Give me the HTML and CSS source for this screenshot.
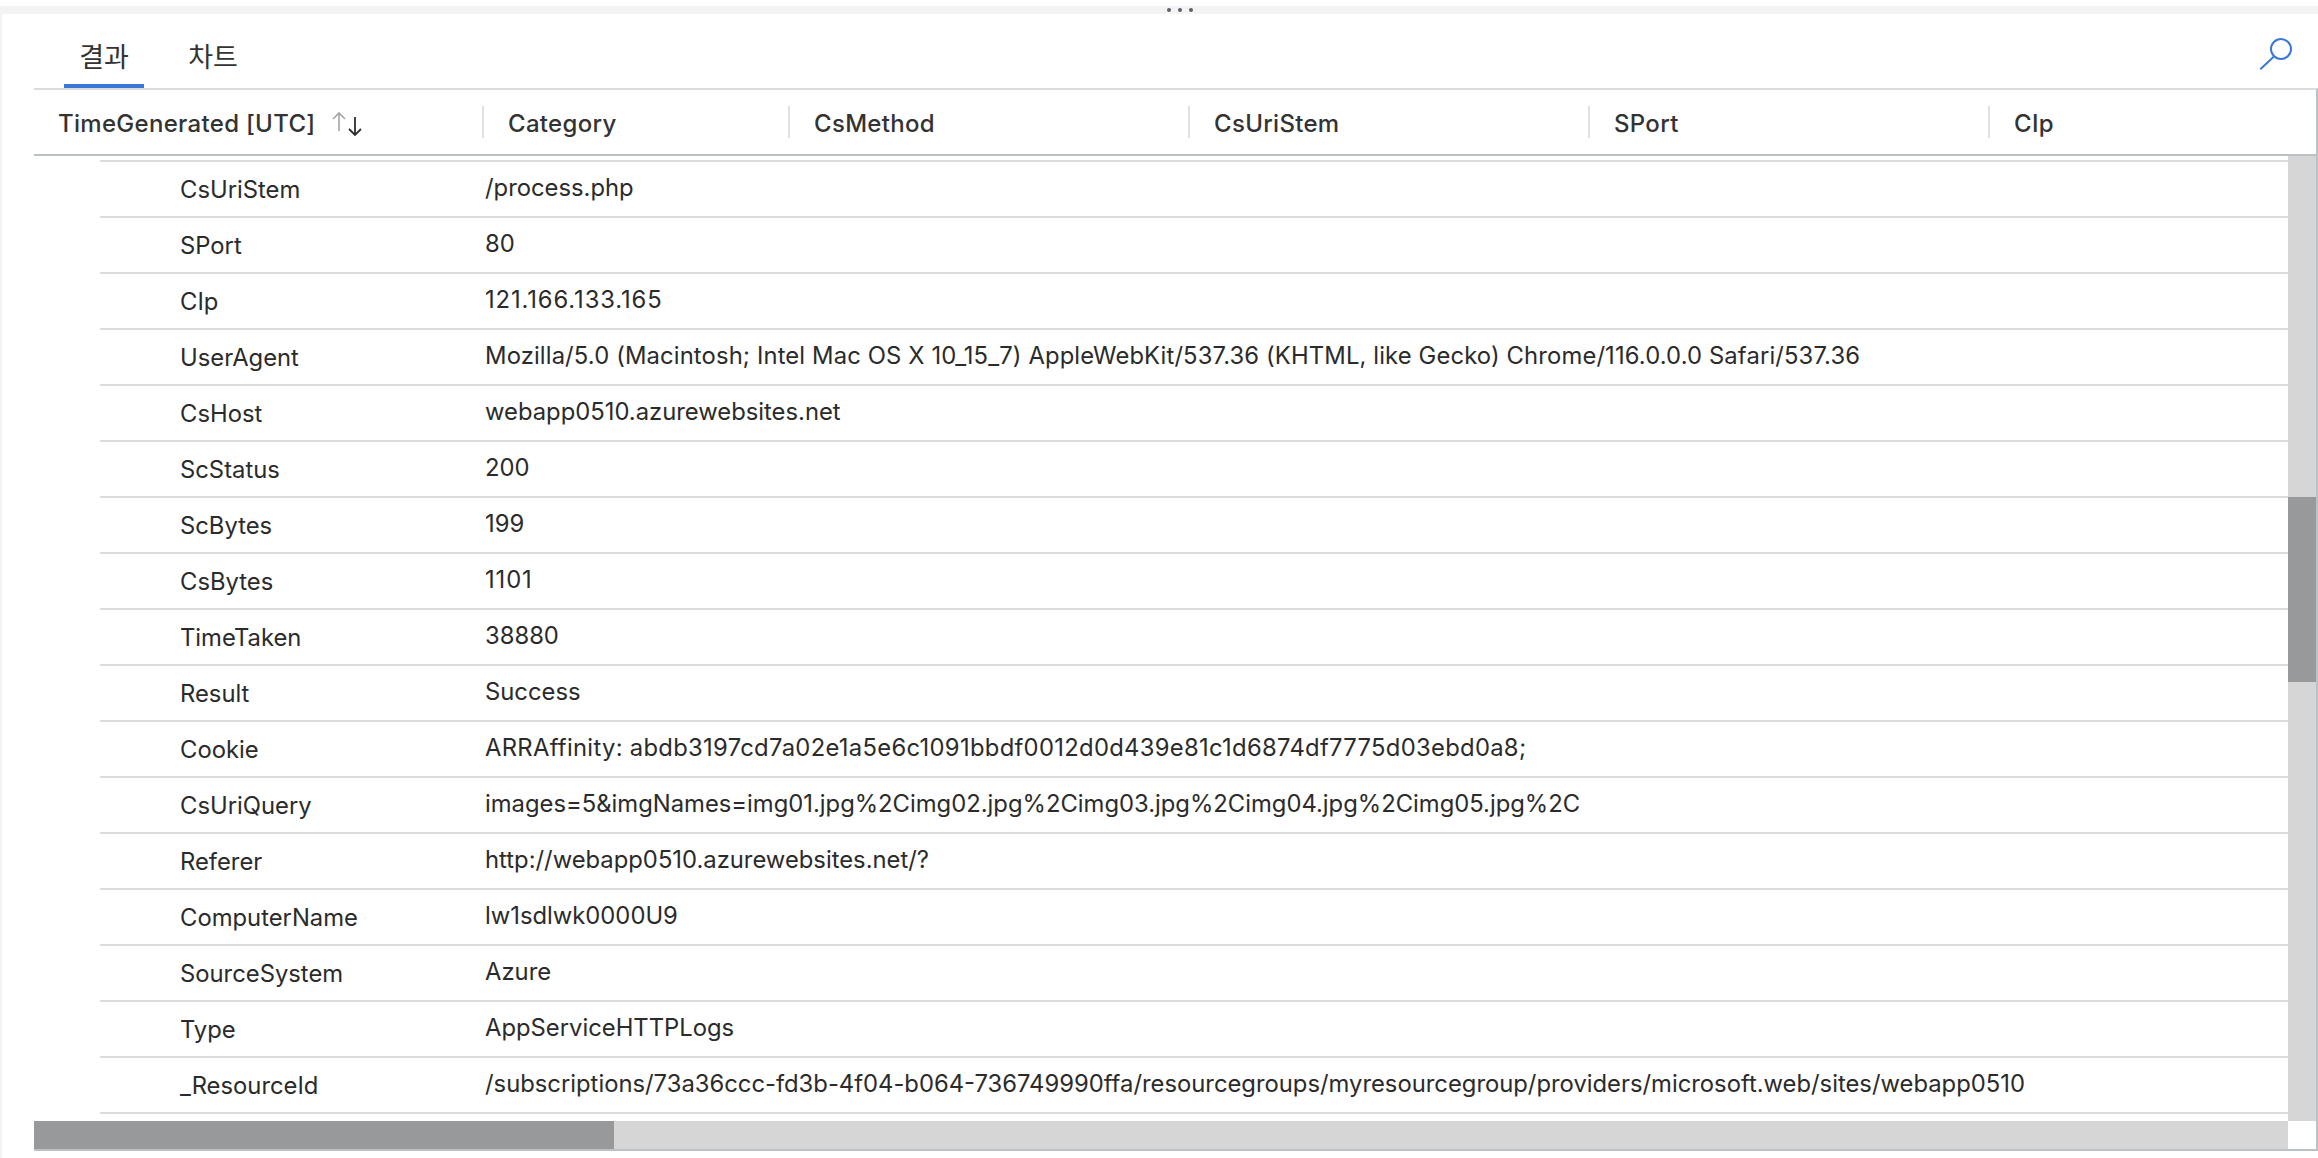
FILE: index.html
```html
<!DOCTYPE html>
<html lang="ko">
<head>
<meta charset="utf-8">
<title>결과</title>
<link rel="stylesheet" href="styles.css">
</head>
<body>
<div class="splitter"><span class="dot"></span><span class="dot"></span><span class="dot"></span></div>
<main class="panel">
  <div class="tabbar">
    <div class="tabs">
      <div class="tab tab-active">결과</div>
      <div class="tab">차트</div>
    </div>
    <svg class="search" width="36" height="36" viewBox="0 0 36 36" fill="none"><circle cx="24" cy="13" r="10" stroke="#3a78d4" stroke-width="2"/><path d="M16.700 20.700 3.300 33.300" stroke="#3a78d4" stroke-width="2"/></svg>
  </div>
  <div class="grid">
    <div class="head">
      <div class="hcell hcell-first">TimeGenerated [UTC]
        <svg class="sort" width="34" height="28" viewBox="0 0 34 28" fill="none"><path d="M9 22V4M3 10l6-6 6 6" stroke="#a6a6a6" stroke-width="1.600"/><path d="M25 8v18M19 20l6 6 6-6" stroke="#2f2f2f" stroke-width="1.800"/></svg>
      </div>
      <div class="hcell hcell-cat"><span class="sep"></span>Category</div>
      <div class="hcell hcell-std"><span class="sep"></span>CsMethod</div>
      <div class="hcell hcell-std"><span class="sep"></span>CsUriStem</div>
      <div class="hcell hcell-std"><span class="sep"></span>SPort</div>
      <div class="hcell hcell-last"><span class="sep"></span>CIp</div>
    </div>
    <div class="body">
      <div class="rows">
        <div class="row"><div class="key">CsUriStem</div><div class="val">/process.php</div></div>
        <div class="row"><div class="key">SPort</div><div class="val">80</div></div>
        <div class="row"><div class="key">CIp</div><div class="val val-ip">121.166.133.165</div></div>
        <div class="row"><div class="key">UserAgent</div><div class="val val-ua">Mozilla/5.0 (Macintosh; Intel Mac OS X 10_15_7) AppleWebKit/537.36 (KHTML, like Gecko) Chrome/116.0.0.0 Safari/537.36</div></div>
        <div class="row"><div class="key">CsHost</div><div class="val">webapp0510.azurewebsites.net</div></div>
        <div class="row"><div class="key">ScStatus</div><div class="val">200</div></div>
        <div class="row"><div class="key">ScBytes</div><div class="val">199</div></div>
        <div class="row"><div class="key">CsBytes</div><div class="val val-ip">1101</div></div>
        <div class="row"><div class="key">TimeTaken</div><div class="val">38880</div></div>
        <div class="row"><div class="key">Result</div><div class="val">Success</div></div>
        <div class="row"><div class="key">Cookie</div><div class="val val-hash">ARRAffinity: abdb3197cd7a02e1a5e6c1091bbdf0012d0d439e81c1d6874df7775d03ebd0a8;</div></div>
        <div class="row"><div class="key">CsUriQuery</div><div class="val">images=5&amp;imgNames=img01.jpg%2Cimg02.jpg%2Cimg03.jpg%2Cimg04.jpg%2Cimg05.jpg%2C</div></div>
        <div class="row"><div class="key">Referer</div><div class="val">http://webapp0510.azurewebsites.net/?</div></div>
        <div class="row"><div class="key">ComputerName</div><div class="val">lw1sdlwk0000U9</div></div>
        <div class="row"><div class="key">SourceSystem</div><div class="val">Azure</div></div>
        <div class="row"><div class="key">Type</div><div class="val">AppServiceHTTPLogs</div></div>
        <div class="row"><div class="key">_ResourceId</div><div class="val">/subscriptions/73a36ccc-fd3b-4f04-b064-736749990ffa/resourcegroups/myresourcegroup/providers/microsoft.web/sites/webapp0510</div></div>
      </div>
      <div class="vtrack"><div class="vthumb"></div></div>
    </div>
    <div class="hbar">
      <div class="htrack"><div class="hthumb"></div></div>
      <div class="corner"></div>
    </div>
  </div>
</main>
</body>
</html>
```
FILE: styles.css
```css
html, body { margin: 0; padding: 0; background: #fff; }
body {
  width: 2318px;
  height: 1158px;
  overflow: hidden;
  font-family: Inter, "Noto Sans CJK KR", sans-serif;
  color: #2b2b2b;
  padding-top: 6px;
  box-sizing: border-box;
}
.splitter {
  height: 8px;
  background: #f3f3f3;
  display: flex;
  justify-content: center;
  align-items: center;
  gap: 7px;
  padding-left: 42px;
}
.dot { width: 4px; height: 4px; border-radius: 50%; background: #5f5f66; }
.panel { border-left: 2px solid #f3f3f3; height: 1144px; box-sizing: border-box; }
.tabbar {
  height: 74px;
  margin-left: 32px;
  display: flex;
  justify-content: space-between;
  box-sizing: border-box;
  padding-left: 30px;
  padding-right: 25px;
}
.tabs { display: flex; gap: 44px; }
.tab {
  width: 80px;
  height: 74px;
  box-sizing: border-box;
  font-family: "Noto Sans CJK KR", sans-serif;
  font-size: 27px;
  line-height: 84px;
  color: #333;
  text-align: center;
  border-bottom: 4px solid transparent;
}
.tab + .tab { width: 50px; }
.tab-active { border-bottom-color: #3a78d4; }
.search { margin-top: 22px; }
.grid { margin-left: 32px; border-top: 2px solid #dcdcdc; border-right: 2px solid #bcc1c5; border-bottom: 2px solid #bcc1c5; }
.head {
  height: 64px;
  display: flex;
  border-bottom: 2px solid #bcc1c5;
  font-size: 24px;
  font-weight: 500;
  letter-spacing: 0.3px;
  color: #333;
}
.hcell {
  position: relative;
  display: flex;
  align-items: center;
  box-sizing: border-box;
  padding-left: 26px;
  padding-top: 2px;
  white-space: nowrap;
}
.hcell-first { width: 448px; padding-left: 24px; }
.hcell-cat { width: 306px; }
.hcell-std { width: 400px; }
.hcell-last { flex: 1; }
.sep { position: absolute; left: 0; top: 16px; width: 2px; height: 32px; background: #dfe1e3; }
.sort { margin-left: 15px; }
.body { display: flex; height: 965px; }
.rows { width: 2254px; padding-top: 4px; box-sizing: border-box; }
.row {
  height: 56px;
  margin-left: 66px;
  box-sizing: border-box;
  border-top: 2px solid #dcdcdc;
  display: flex;
  font-size: 23.8px;
  line-height: 54px;
  color: #2b2b2b;
}
.row:last-child { height: 58px; border-bottom: 2px solid #dcdcdc; }
.key { width: 385px; padding-left: 80px; box-sizing: border-box; padding-top: 1px; }
.val { flex: 1; margin-top: -1px; white-space: nowrap; }
.val-ip { letter-spacing: 0.9px; }
.val-ua { letter-spacing: 0.13px; }
.val-hash { letter-spacing: 0.3px; }
.vtrack { width: 28px; background: #d6d6d6; }
.vthumb { width: 28px; height: 185px; margin-top: 341px; background: #98999b; }
.hbar { display: flex; height: 28px; }
.htrack { width: 2254px; background: #d6d6d6; }
.hthumb { width: 580px; height: 28px; background: #98999b; }
.corner { width: 28px; background: #fff; }
```
